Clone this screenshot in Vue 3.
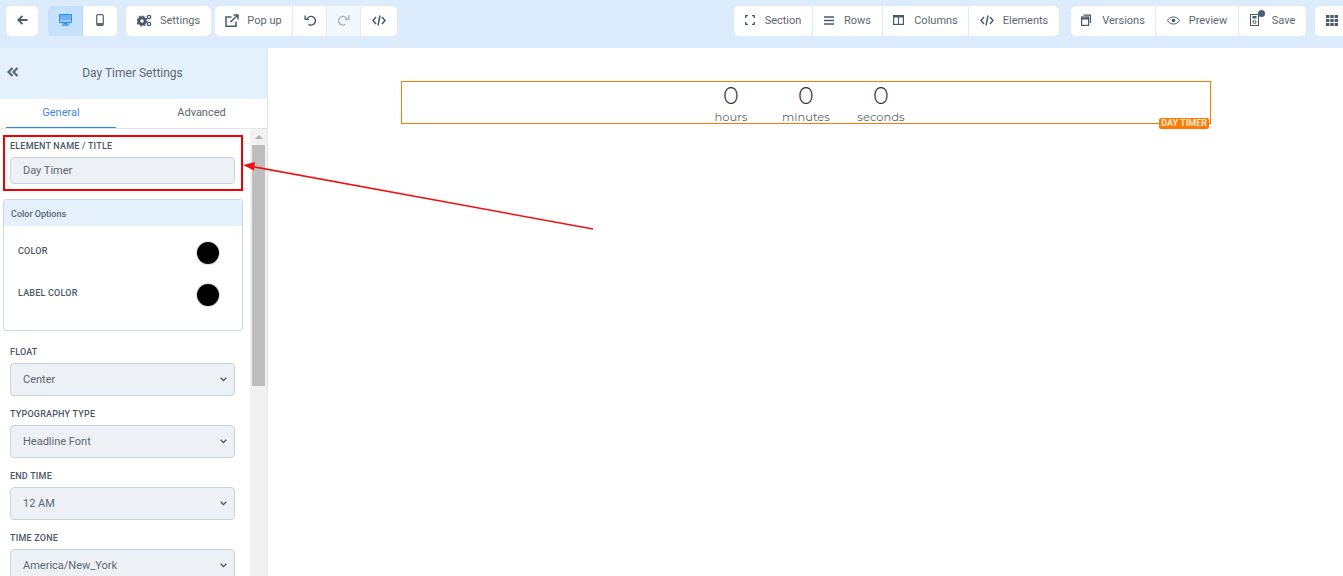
<template>
  <div class="page">
    <header class="topbar">
      <div class="group"><button class="tb square"><svg width="11" height="10" viewBox="0 0 11 10"><path d="M10.500 5H1.500M5.500 .8 1.200 5l4.300 4.200" fill="none" stroke="#4a5a6a" stroke-width="1.800"/></svg></button></div>
      <div class="group devices">
        <button class="tb dev active">
          <svg width="13" height="12" viewBox="0 0 13 12"><rect x="0.500" y="0.500" width="12" height="8" rx="1" fill="none" stroke="#2f8fe8" stroke-width="1.300"/><rect x="1" y="1" width="11" height="5.500" fill="#6fb2f3"/><rect x="4.500" y="9" width="4" height="1.500" fill="#2f8fe8"/><rect x="3" y="10.500" width="7" height="1.200" fill="#2f8fe8"/></svg>
        </button>
        <button class="tb dev">
          <svg width="8" height="12" viewBox="0 0 8 12"><rect x="0.700" y="0.700" width="6.600" height="10.600" rx="1.200" fill="none" stroke="#5b6b7a" stroke-width="1.300"/><rect x="1" y="9" width="6" height="2.500" fill="#5b6b7a"/></svg>
        </button>
      </div>
      <div class="cluster">
        <div class="group">
          <button class="tb settings">
            <svg width="15" height="13" viewBox="0 0 15 13"><circle cx="5" cy="7" r="3.200" fill="none" stroke="#4a5a6a" stroke-width="3"/><circle cx="5" cy="7" r="5" fill="none" stroke="#4a5a6a" stroke-width="1.200" stroke-dasharray="2 1.900"/><circle cx="12" cy="3" r="1.700" fill="none" stroke="#4a5a6a" stroke-width="1.300"/><circle cx="12" cy="10" r="1.700" fill="none" stroke="#4a5a6a" stroke-width="1.300"/></svg>
            <span>Settings</span>
          </button>
        </div>
        <div class="group">
          <button class="tb popup">
            <svg width="14" height="13" viewBox="0 0 14 13"><path d="M11 7.500v4.800H1V3h5.500" fill="none" stroke="#4a5a6a" stroke-width="1.500"/><path d="M5.500 8 12.500 1.500M8.500 1h4.500v4.500" fill="none" stroke="#4a5a6a" stroke-width="1.500"/></svg>
            <span>Pop up</span>
          </button>
          <button class="tb undo"><svg width="12" height="12" viewBox="0 0 13 13"><path d="M3 6.500A4.700 4.700 0 1 1 5 11.200M1.200 1.500v4.300h4.300" fill="none" stroke="#4a5a6a" stroke-width="1.500"/></svg></button>
          <button class="tb undo redo"><svg width="12" height="12" viewBox="0 0 13 13"><path d="M10 6.500A4.700 4.700 0 1 0 8 11.200M11.800 1.500v4.300H7.500" fill="none" stroke="#aab4bd" stroke-width="1.500"/></svg></button>
          <button class="tb code"><svg width="14" height="11" viewBox="0 0 14 11"><path d="M4 2 1 5.500 4 9M10 2l3 3.500L10 9M8 .5 6 10.500" fill="none" stroke="#4a5a6a" stroke-width="1.500"/></svg></button>
        </div>
      </div>
      <div class="spacer"></div>
      <div class="group builders">
        <button class="tb section">
          <svg width="10" height="10" viewBox="0 0 10 10"><path d="M.7 3V.7H3M7 .7h2.300V3M9.300 7v2.300H7M3 9.300H.7V7" fill="none" stroke="#4a5a6a" stroke-width="1.300"/></svg>
          <span>Section</span>
        </button>
        <button class="tb rows">
          <svg width="10" height="9" viewBox="0 0 10 9"><path d="M0 1h10M0 4.500h10M0 8h10" stroke="#4a5a6a" stroke-width="1.300"/></svg>
          <span>Rows</span>
        </button>
        <button class="tb columns">
          <svg width="11" height="10" viewBox="0 0 11 10"><rect x=".6" y=".6" width="9.800" height="8.800" fill="none" stroke="#4a5a6a" stroke-width="1.200"/><path d="M0 1.500h11" stroke="#4a5a6a" stroke-width="2"/><path d="M5.500 2v7" stroke="#4a5a6a"/></svg>
          <span>Columns</span>
        </button>
        <button class="tb elements">
          <svg width="14" height="11" viewBox="0 0 14 11"><path d="M4 2 1 5.500 4 9M10 2l3 3.500L10 9M8 .5 6 10.500" fill="none" stroke="#4a5a6a" stroke-width="1.400"/></svg>
          <span>Elements</span>
        </button>
      </div>
      <div class="group">
        <button class="tb versions">
          <svg width="10" height="12" viewBox="0 0 10 12"><rect x=".6" y="3" width="7" height="8.400" fill="#fff" stroke="#4a5a6a" stroke-width="1.200"/><path d="M.6 4.500h7" stroke="#4a5a6a" stroke-width="2"/><path d="M2.500 1.200h6.900V9" fill="none" stroke="#4a5a6a" stroke-width="1.200"/></svg>
          <span>Versions</span>
        </button>
        <button class="tb preview">
          <svg width="13" height="9" viewBox="0 0 13 9"><path d="M.5 4.500C2 2 4.200 1 6.500 1s4.500 1 6 3.500C11 7 8.800 8 6.500 8S2 7 .5 4.500Z" fill="none" stroke="#4a5a6a"/><circle cx="6.500" cy="4.500" r="1.800" fill="#4a5a6a"/></svg>
          <span>Preview</span>
        </button>
        <button class="tb save">
          <svg width="10" height="12" viewBox="0 0 10 12"><rect x=".5" y=".5" width="8" height="11" fill="none" stroke="#4a5a6a"/><rect x="2.500" y="2" width="4" height="2.500" fill="#4a5a6a"/><circle cx="4.500" cy="8" r="1.500" fill="none" stroke="#4a5a6a"/></svg>
          <span>Save</span>
          <i class="dot"></i>
        </button>
      </div>
      <div class="group last">
        <button class="tb grid">
          <svg width="12" height="11" viewBox="0 0 12 11"><path d="M0 0h3.400v3H0zM4.300 0h3.400v3H4.300zM8.600 0H12v3H8.600zM0 4h3.400v3H0zM4.300 4h3.400v3H4.300zM8.600 4H12v3H8.600zM0 8h3.400v3H0zM4.300 8h3.400v3H4.300zM8.600 8H12v3H8.600z" fill="#4a5a6a"/></svg>
        </button>
      </div>
    </header>

    <div class="body">
      <aside class="sidebar">
        <div class="side-head">
          <svg class="collapse" width="12" height="10" viewBox="0 0 12 10"><path d="M5.500 1 1.500 5l4 4M10.500 1l-4 4 4 4" fill="none" stroke="#55677a" stroke-width="2.200"/></svg>
          <span>Day Timer Settings</span>
        </div>
        <div class="tabs">
          <div class="tab on">General</div>
          <div class="tab">Advanced</div>
        </div>
        <div class="side-scroll">
          <div class="form">
            <div class="name-field">
              <label>ELEMENT NAME / TITLE</label>
              <div class="input">Day Timer</div>
            </div>
            <div class="colors">
              <div class="colors-head">Color Options</div>
              <div class="colors-body">
                <div v-for="c in colorRows" :key="c" class="color-row">
                  <span>{{ c }}</span>
                  <i class="swatch"></i>
                </div>
              </div>
            </div>
            <div v-for="f in selects" :key="f.label" class="field">
              <label>{{ f.label }}</label>
              <div class="select">
                <span>{{ f.value }}</span>
                <svg width="7" height="5" viewBox="0 0 7 5"><path d="M.7 .8 3.500 3.600 6.300 .8" fill="none" stroke="#44505c" stroke-width="1.300"/></svg>
              </div>
            </div>
          </div>
          <div class="scrollbar">
            <div class="arrow"></div>
            <div class="thumb"></div>
          </div>
        </div>
      </aside>

      <main class="canvas">
        <div class="timer">
          <div v-for="t in units" :key="t" class="unit">
            <div class="num">0</div>
            <div class="lbl">{{ t }}</div>
          </div>
          <span class="tag">DAY TIMER</span>
        </div>
        <svg class="pointer" width="360" height="80" viewBox="0 0 360 80">
          <path d="M351 68 10 5.500" stroke="#ee1111" stroke-width="1.500"/>
          <path d="M1 4 13 1 12 9.500Z" fill="#ee1111"/>
        </svg>
      </main>
    </div>
  </div>
</template>

<script setup>
const colorRows = ['COLOR', 'LABEL COLOR']
const selects = [
  { label: 'FLOAT', value: 'Center' },
  { label: 'TYPOGRAPHY TYPE', value: 'Headline Font' },
  { label: 'END TIME', value: '12 AM' },
  { label: 'TIME ZONE', value: 'America/New_York' },
]
const units = ['hours', 'minutes', 'seconds']
</script>

<style>
html, body { margin: 0; height: 100%; overflow: hidden; background: #fff; }
</style>

<style scoped>
.page {
  width: 1343px;
  height: 576px;
  display: flex;
  flex-direction: column;
  overflow: hidden;
  font-family: Roboto, "Liberation Sans", sans-serif;
  color: #5a6672;
}
.topbar {
  height: 48px;
  flex: none;
  box-sizing: border-box;
  background: #dcecfd;
  display: flex;
  align-items: flex-start;
  padding: 6px 0 0 6px;
  gap: 9px;
}
.spacer { flex: 1; }
.cluster { display: flex; gap: 4px; }
.group { display: flex; gap: 1px; height: 30px; border-radius: 5px; overflow: hidden; }
.group.devices { margin-left: 1px; gap: 0; }
.group.builders { margin-right: 3px; }
.group.last { border-radius: 5px 0 0 5px; }
.tb {
  height: 30px;
  border: 0;
  margin: 0;
  padding: 0 0 2px;
  background: #fff;
  display: flex;
  align-items: center;
  justify-content: center;
  gap: 10px;
  font: 400 11px Roboto, "Liberation Sans", sans-serif;
  color: #5c6872;
}
.square { width: 32px; }
.dev { width: 34px; }
.dev.active { width: 35px; background: #c6e1fb; border-right: 1px solid #b5d8f9; }
.settings { width: 85px; gap: 8px; }
.popup { width: 77px; gap: 8px; }
.undo { width: 33px; }
.redo { background: #f3f8fd; }
.code { width: 36px; }
.section { width: 78px; }
.rows { width: 69px; }
.columns { width: 85px; }
.elements { width: 90px; gap: 9px; }
.versions { width: 84px; gap: 11px; }
.preview { width: 82px; gap: 9px; }
.save { width: 67px; gap: 12px; position: relative; }
.dot {
  position: absolute;
  top: 4px;
  left: 19px;
  width: 7px;
  height: 7px;
  border-radius: 50%;
  background: #4a5f78;
}
.grid { width: 28px; padding-left: 6px; }
.body { flex: 1; display: flex; min-height: 0; }
.sidebar {
  width: 268px;
  flex: none;
  box-sizing: border-box;
  border-right: 1px solid #e3e6e9;
  display: flex;
  flex-direction: column;
  min-height: 0;
}
.side-head {
  height: 51px;
  flex: none;
  box-sizing: border-box;
  background: #e4f1fd;
  display: flex;
  align-items: center;
  justify-content: center;
  position: relative;
  font-size: 12px;
  color: #5c6770;
  padding: 0 2px 2px 0;
}
.collapse { position: absolute; left: 7px; top: 19px; }
.tabs { display: flex; height: 29px; flex: none; border-bottom: 1px solid #e3e6e9; }
.tab {
  width: 110px;
  margin-left: 6px;
  font-size: 11px;
  line-height: 28px;
  text-align: center;
  color: #5c6770;
  box-sizing: border-box;
}
.tab + .tab { width: 151px; margin-left: 0; padding-left: 20px; }
.tab.on { color: #3f86e6; border-bottom: 1px solid #2f86e6; height: 29px; }
.side-scroll { flex: 1; display: flex; min-height: 0; overflow: hidden; }
.form { width: 250px; flex: none; box-sizing: border-box; padding: 6px 0 0 3px; }
.name-field {
  width: 240px;
  height: 56px;
  box-sizing: border-box;
  border: 2px solid #f00000;
  padding: 3px 5px;
}
label {
  display: block;
  font-size: 9px;
  font-weight: 500;
  line-height: 12px;
  color: #4a5866;
  letter-spacing: .2px;
}
.input, .select {
  box-sizing: border-box;
  background: #edf1f6;
  border: 1px solid #c9d4e0;
  border-radius: 4px;
  font-size: 11px;
  color: #5a6672;
  padding-left: 12px;
}
.input { margin-top: 5px; height: 27px; line-height: 25px; width: 225px; }
.colors {
  margin-top: 8px;
  width: 240px;
  height: 132px;
  box-sizing: border-box;
  border: 1px solid #cdd8e2;
  border-radius: 3px;
  overflow: hidden;
}
.colors-head {
  height: 26px;
  background: #e4f1fd;
  font-size: 9px;
  font-weight: 500;
  line-height: 28px;
  padding-left: 7px;
  color: #546475;
}
.colors-body { padding: 16px 23px 0 14px; }
.color-row {
  height: 24px;
  margin-bottom: 18px;
  display: flex;
  justify-content: space-between;
  align-items: flex-start;
  font-size: 9px;
  font-weight: 500;
  line-height: 18px;
  color: #4a5866;
  letter-spacing: .2px;
}
.swatch {
  width: 22px;
  height: 22px;
  border-radius: 50%;
  background: #000;
  box-shadow: 0 0 0 1px #ddd;
}
.field { margin: 15px 0 0 7px; width: 225px; }
.field + .field { margin-top: 12px; }
.select {
  height: 33px;
  margin-top: 5px;
  display: flex;
  align-items: center;
  justify-content: space-between;
  padding-right: 7px;
}
.scrollbar { width: 17px; background: #f1f1f1; flex: none; }
.arrow {
  width: 0;
  height: 0;
  margin: 6px auto 6px;
  border: 4px solid transparent;
  border-top: 0;
  border-bottom: 4px solid #b0b0b0;
}
.thumb { height: 241px; width: 13px; margin: 0 2px; background: #bebebe; }
.canvas { flex: 1; position: relative; background: #fff; padding: 33px 0 0 133px; }
.timer {
  width: 810px;
  height: 43px;
  box-sizing: border-box;
  border: 1px solid #ff7a00;
  display: flex;
  justify-content: center;
  gap: 27px;
  position: relative;
  font-family: Montserrat, "Open Sans", sans-serif;
  color: #444;
}
.unit { width: 48px; text-align: center; }
.num { font-size: 24px; line-height: 28px; color: #333; font-weight: 300; }
.lbl { font-size: 11.500px; line-height: 13px; margin-top: 1px; color: #666; }
.tag {
  position: absolute;
  right: 1px;
  bottom: -6px;
  background: #ff7a00;
  color: #ffe9d2;
  font: 700 9px/11px Roboto, sans-serif;
  padding: 0 2px;
  border-radius: 2px;
}
.pointer { position: absolute; left: -26px; top: 113px; }
</style>
